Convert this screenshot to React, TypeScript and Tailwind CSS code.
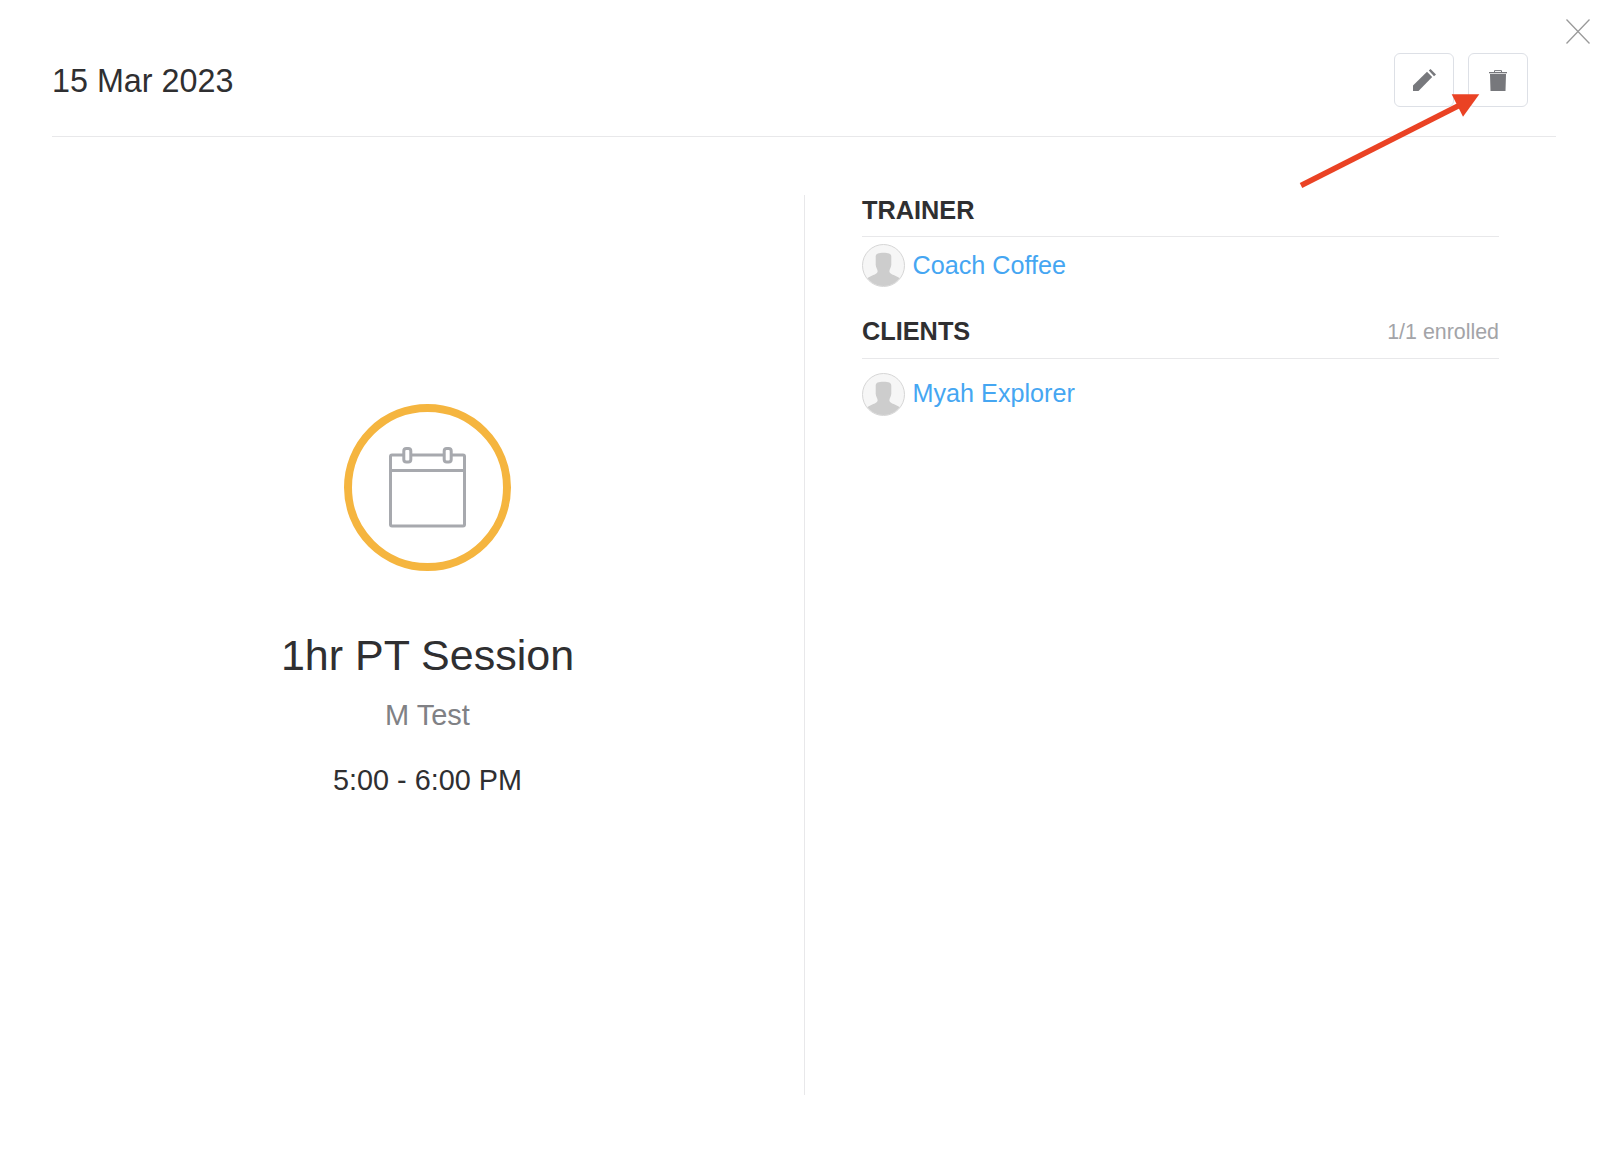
import React from "react";

function Avatar() {
  return (
    <div className="w-[43px] h-[43px] shrink-0 rounded-full overflow-hidden border border-[#d6d6d6] bg-[#f6f6f6]">
      <svg viewBox="0 0 42 42" className="w-full h-full block">
        <path d="M13 12C13 9 15.500 8 21 8C26.500 8 29 9 29 12V20C29 23 27 25 27 27C27 29 29 30 32 31L38 34V42H4V34L10 31C13 30 15 29 15 27C15 25 13 23 13 20Z" fill="#cdcdcd" />
      </svg>
    </div>
  );
}

function IconButton({ children }: { children: React.ReactNode }) {
  return (
    <button className="w-[60px] h-[54px] rounded-md border border-[#dde0e6] bg-white flex items-center justify-center">
      {children}
    </button>
  );
}

export default function App() {
  return (
    <div className="relative w-[1610px] h-[1150px] bg-white text-[#2f2f31] overflow-hidden font-['Liberation_Sans',Arial,sans-serif]">
      <button className="absolute left-[1566px] top-[19px] w-[24px] h-[25px]">
        <svg viewBox="0 0 24 25" className="w-full h-full block" fill="none" stroke="#9a9a9a" strokeWidth="1.3">
          <path d="M0.5 0.5 L23.500 24.500 M23.500 0.500 L0.500 24.500" />
        </svg>
      </button>

      <div className="pt-[53px] pl-[52px]">
        <header className="w-[1504px] h-[84px] border-b border-[#e8e8ea] flex justify-between pr-[28px]">
          <h1 className="text-[32.3px] leading-[56px] font-normal">15 Mar 2023</h1>
          <div className="flex gap-[14px] items-start">
            <IconButton>
              <svg viewBox="0 0 23 22" className="w-[23px] h-[22px]" fill="#77787c">
                <path d="M0 16.500 14 2.800 19.200 8 5.500 22H0Z" />
                <path d="M15.800 1.600 17.500 0 23 5.500 21 7.200Z" />
              </svg>
            </IconButton>
            <IconButton>
              <svg viewBox="0 0 18 21" className="w-[18px] h-[21px]" fill="#77787c">
                <path d="M5.500 2.500V0.600H12.500V2.500" fill="none" stroke="#77787c" strokeWidth="1" />
                <rect x="0" y="2" width="18" height="1.300" />
                <path d="M1 4H17L16.500 21H1.500Z" />
              </svg>
            </IconButton>
          </div>
        </header>

        <main className="mt-[58px] flex h-[900px]">
          <section className="w-[753px] border-r border-[#e8e8ea] flex flex-col items-center pt-[209px] pr-[1px]">
            <div className="w-[167px] h-[167px] rounded-full border-[8px] border-[#f5b53f] flex items-center justify-center">
              <svg viewBox="0 0 77 81" className="w-[77px] h-[81px]" fill="none" stroke="#a7a9ae" strokeWidth="3" strokeLinejoin="round">
                <rect x="1.500" y="8.100" width="74" height="71" rx="1.500" />
                <path d="M1.500 23.500H75.500" />
                <rect x="14.800" y="1.500" width="7" height="13.600" rx="2.500" fill="#fff" />
                <rect x="55.200" y="1.500" width="7" height="13.600" rx="2.500" fill="#fff" />
              </svg>
            </div>
            <h2 className="mt-[55px] text-[43px] leading-[58px] font-normal">1hr PT Session</h2>
            <p className="mt-[14px] text-[29px] leading-[34px] text-[#808185]">M Test</p>
            <p className="mt-[30px] text-[28.8px] leading-[36px]">5:00 - 6:00 PM</p>
          </section>

          <section className="pl-[57px] w-[694px]">
            <div className="h-[42px] border-b border-[#e8e8ea] flex items-start">
              <h3 className="text-[25.300px] leading-[30px] font-bold">TRAINER</h3>
            </div>
            <div className="mt-[7px] flex items-center gap-[7.500px]">
              <Avatar />
              <a className="text-[25.200px] leading-[28px] pb-[2px] text-[#45a6f2]">Coach Coffee</a>
            </div>
            <div className="mt-[30px] h-[42px] border-b border-[#e8e8ea] flex items-start justify-between">
              <h3 className="text-[25.300px] leading-[28px] font-bold">CLIENTS</h3>
              <span className="text-[21.400px] leading-[30px] text-[#a3a4a8]">1/1 enrolled</span>
            </div>
            <div className="mt-[14px] flex items-center gap-[7.500px]">
              <Avatar />
              <a className="text-[25.200px] leading-[28px] pb-[4px] text-[#45a6f2]">Myah Explorer</a>
            </div>
          </section>
        </main>
      </div>

      <svg className="absolute left-[1296px] top-[90px] w-[190px] h-[100px]" viewBox="0 0 190 100">
        <path d="M5 95.500 L165 14.500" stroke="#ea4224" strokeWidth="5.500" fill="none" />
        <path d="M155.700 4.300 L183.300 4.300 L167 26.700 Z" fill="#ea4224" />
      </svg>
    </div>
  );
}
